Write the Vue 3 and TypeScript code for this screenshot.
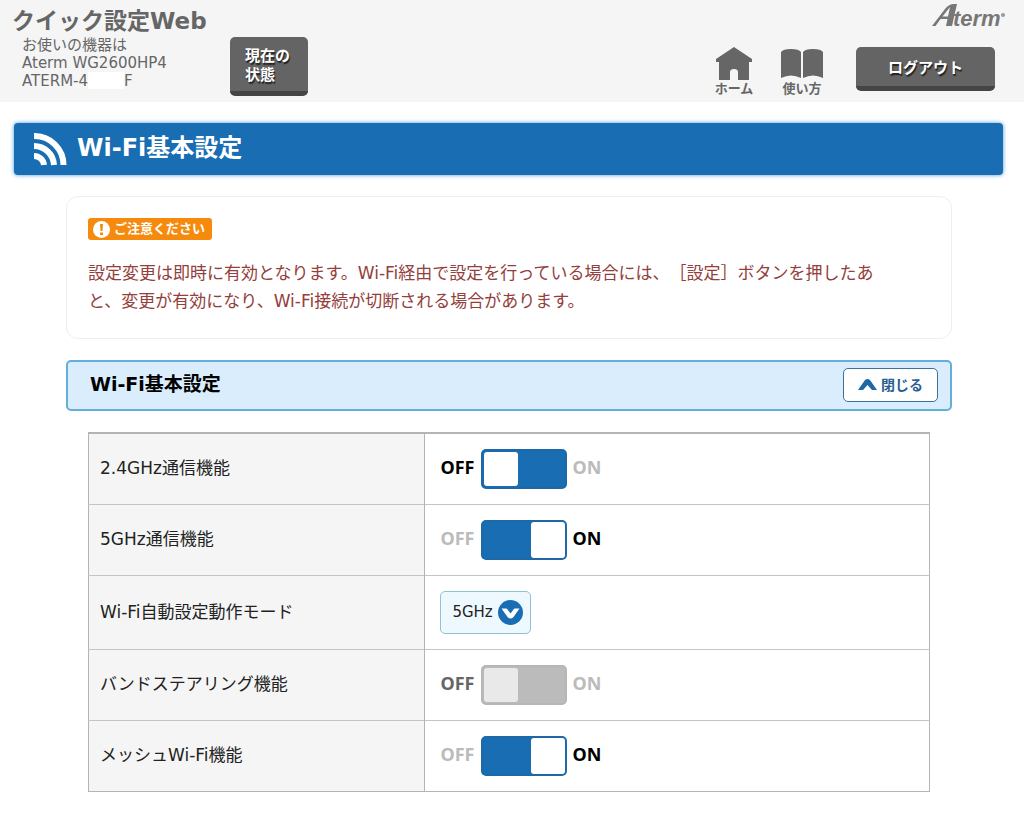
<script setup lang="ts">
import { ref } from 'vue'

interface Row {
  id: string
  label: string
  kind: 'toggle' | 'select'
  on?: boolean
  disabled?: boolean
}

const rows = ref<Row[]>([
  { id: 'band24', label: '2.4GHz通信機能', kind: 'toggle', on: false },
  { id: 'band5', label: '5GHz通信機能', kind: 'toggle', on: true },
  { id: 'mode', label: 'Wi-Fi自動設定動作モード', kind: 'select' },
  { id: 'steering', label: 'バンドステアリング機能', kind: 'toggle', on: false, disabled: true },
  { id: 'mesh', label: 'メッシュWi-Fi機能', kind: 'toggle', on: true },
])
const mode = ref('5GHz')
</script>

<template>
  <div class="page">
    <header class="header">
      <div class="ident">
        <h1>クイック設定Web</h1>
        <p>お使いの機器は<br />Aterm WG2600HP4<br />ATERM-4<span class="mask"></span>F</p>
      </div>
      <button type="button" class="dark status">現在の<br />状態</button>
      <div class="right">
        <svg class="logo" viewBox="0 0 76 34" role="img" aria-label="Aterm">
          <path d="M0 24 L13 7 Q17 2 22 2 H25 L20 24 H14 L15.500 17 H8.500 L3.500 24Z M10.500 14.500 H16 L18 5Z" fill="#777" fill-rule="evenodd" />
          <text x="21" y="24" class="logo-text">term</text>
          <circle cx="71" cy="13" r="2" fill="#999" />
        </svg>
        <nav class="nav">
          <a href="#home">
            <svg width="36" height="34" viewBox="0 0 36 34"><path d="M18 0 L36 12 V15 H33 V33 H22 V25 Q22 22 18 22 Q14 22 14 25 V33 H3 V15 H0 V12Z" fill="#666" /></svg>
            <span>ホーム</span>
          </a>
          <a href="#guide">
            <svg width="42" height="34" viewBox="0 0 42 34"><path d="M0 5 Q2 2 10 2 Q18 2 20 5 V31 Q10 26 0 31Z M22 5 Q24 2 32 2 Q40 2 42 5 V31 Q32 26 22 31Z" fill="#666" /></svg>
            <span>使い方</span>
          </a>
          <button type="button" class="dark logout">ログアウト</button>
        </nav>
      </div>
    </header>

    <h2 class="banner">
      <svg width="33" height="33" viewBox="0 0 33 33" fill="none" stroke="#fff" stroke-width="6">
        <path d="M0 3 A29 29 0 0 1 29.500 32" />
        <path d="M0 13 A20 20 0 0 1 20 32" />
        <path d="M0 23 A10 10 0 0 1 10 32" />
      </svg>
      <span>Wi-Fi基本設定</span>
    </h2>

    <main class="content">
      <section class="notice">
        <div class="tag">
          <svg width="17" height="17" viewBox="0 0 17 17"><circle cx="8.500" cy="8.500" r="8.500" fill="#fff" /><path d="M7 3 H10 L9.500 10 H7.500Z M7 11.500 H10 V14 H7Z" fill="#f58a0c" /></svg>
          <span>ご注意ください</span>
        </div>
        <p>設定変更は即時に有効となります。Wi-Fi経由で設定を行っている場合には、［設定］ボタンを押したあと、変更が有効になり、Wi-Fi接続が切断される場合があります。</p>
      </section>

      <div class="section-head">
        <h3>Wi-Fi基本設定</h3>
        <button type="button" class="close">
          <svg width="19" height="11" viewBox="0 0 19 11"><path d="M0 11 L7 1 Q9.500 -1 12 1 L19 11 H14 L9.500 6 L5 11Z" fill="#1f67a5" /></svg>
          <span>閉じる</span>
        </button>
      </div>

      <table class="settings">
        <tbody>
          <tr v-for="row in rows" :key="row.id">
            <th scope="row"><label :for="row.id">{{ row.label }}</label></th>
            <td>
              <div v-if="row.kind === 'toggle'" class="toggle" :class="{ on: row.on, disabled: row.disabled }">
                <span class="off-text">OFF</span>
                <input :id="row.id" v-model="row.on" type="checkbox" role="switch" :disabled="row.disabled" />
                <span class="on-text">ON</span>
              </div>
              <div v-else class="pick">
                <select :id="row.id" v-model="mode">
                  <option>5GHz</option>
                  <option>2.4GHz</option>
                </select>
                <svg width="25" height="25" viewBox="0 0 25 25"><circle cx="12.500" cy="12.500" r="12.500" fill="#186db3" /><path d="M3.500 8.500 H8 Q9 8.500 9.500 9.500 L12.500 13.500 L15.500 9.500 Q16 8.500 17 8.500 H21.500 L15.500 17 Q12.500 20 9.500 17Z" fill="#fff" /></svg>
              </div>
            </td>
          </tr>
        </tbody>
      </table>
    </main>
  </div>
</template>

<style>
body {
  margin: 0;
  background: #fff;
}
</style>

<style scoped>
.page {
  font-family: "DejaVu Sans", "Noto Sans CJK JP", sans-serif;
  color: #222;
  padding-bottom: 20px;
}
h1, h2, h3, p {
  margin: 0;
}
button {
  font-family: inherit;
}
.header {
  display: flex;
  align-items: flex-start;
  height: 102px;
  box-sizing: border-box;
  padding: 2px 29px 0 12px;
  background: #f5f5f5;
  color: #666;
}
.ident {
  width: 218px;
  padding-top: 4px;
}
.ident h1 {
  font-size: 23px;
  line-height: 30px;
  white-space: nowrap;
}
.ident p {
  padding-left: 10px;
  font-size: 15px;
  line-height: 18px;
}
.mask {
  display: inline-block;
  width: 36px;
  height: 17px;
  vertical-align: -3px;
  background: #fff;
}
.dark {
  border: 0;
  border-bottom: 5px solid #454545;
  border-radius: 5px;
  background: #646464;
  color: #fff;
  font-size: 15px;
  font-weight: bold;
  line-height: 19px;
  text-shadow: 1px 2px 1px #222;
}
.status {
  width: 78px;
  height: 59px;
  margin-top: 35px;
  padding: 4px 0 0 15px;
  text-align: left;
}
.right {
  margin-left: auto;
  display: flex;
  flex-direction: column;
  align-items: flex-end;
}
.logo {
  width: 76px;
  height: 34px;
  margin-right: -13px;
}
.logo-text {
  font: italic bold 22px "Liberation Sans", sans-serif;
  fill: #777;
}
.nav {
  display: flex;
  align-items: flex-start;
  margin-top: 11px;
}
.nav a {
  display: flex;
  flex-direction: column;
  align-items: center;
  width: 68px;
  color: #666;
  font-size: 13px;
  font-weight: bold;
  line-height: 16px;
  text-decoration: none;
}
.logout {
  width: 139px;
  height: 44px;
  margin-left: 20px;
  padding: 4px 0 0;
}
.banner {
  display: flex;
  align-items: center;
  gap: 10px;
  height: 52px;
  margin: 21px 21px 21px 14px;
  padding-left: 20px;
  border-radius: 4px;
  background: #186db3;
  box-shadow: 0 0 4px #4a9ad8;
  color: #fff;
  font-size: 24px;
  line-height: 48px;
}
.banner span {
  padding-bottom: 3px;
}
.content {
  margin: 0 72px 0 66px;
}
.notice {
  padding: 21px 21px 23px;
  border: 1px solid #eee;
  border-radius: 12px;
}
.tag {
  display: inline-flex;
  align-items: center;
  gap: 4px;
  height: 22px;
  padding: 0 7px 0 5px;
  border-radius: 3px;
  background: #f58a0c;
  color: #fff;
  font-size: 13px;
  font-weight: bold;
  line-height: 20px;
}
.notice p {
  margin-top: 17px;
  padding-right: 32px;
  color: #93403c;
  font-size: 17px;
  line-height: 28px;
  text-spacing-trim: space-all;
}
.section-head {
  display: flex;
  align-items: center;
  justify-content: space-between;
  height: 47px;
  margin-top: 21px;
  padding: 0 12px 0 22px;
  border: 2px solid #63aedb;
  border-radius: 5px;
  background: #d9edfc;
}
.section-head h3 {
  color: #000;
  font-size: 19px;
  line-height: 28px;
  padding-bottom: 2px;
}
.close {
  display: flex;
  align-items: center;
  justify-content: center;
  gap: 4px;
  width: 95px;
  height: 34px;
  padding: 0 0 2px;
  border: 1px solid #3f7099;
  border-radius: 5px;
  background: #fff;
  color: #285f90;
  font-size: 14px;
  font-weight: bold;
}
.settings {
  width: calc(100% - 44px);
  margin: 21px 22px 0;
  border: 1px solid #b4b4b4;
  border-top-width: 2px;
  border-collapse: collapse;
  table-layout: fixed;
}
.settings tr + tr {
  border-top: 1px solid #c4c4c4;
}
.settings th {
  width: 40%;
  height: 70px;
  box-sizing: border-box;
  padding: 0 11px 4px;
  border-right: 1px solid #b4b4b4;
  background: #f5f5f5;
  font-size: 17px;
  font-weight: normal;
  text-align: left;
}
.settings td {
  padding: 15px;
}
.toggle {
  display: flex;
  align-items: center;
  gap: 5px;
  color: #bbb;
  font: bold 18px/24px "Noto Sans", sans-serif;
}
.toggle span {
  padding-bottom: 4px;
}
.toggle .off-text {
  width: 36px;
}
.toggle:not(.on) .off-text, .toggle.on .on-text {
  color: #000;
}
.toggle.disabled .off-text {
  color: #666;
}
.toggle input {
  appearance: none;
  display: flex;
  width: 86px;
  height: 40px;
  box-sizing: border-box;
  margin: 0;
  padding: 1px;
  border: 2px solid #1f68a7;
  border-radius: 5px;
  background: #186db3;
}
.toggle input::before {
  content: "";
  width: 34px;
  border-radius: 3px;
  background: #fff;
}
.toggle input:checked {
  padding: 0;
  justify-content: flex-end;
}
.toggle input:disabled {
  border-color: #b6b6b6;
  background: #bbb;
}
.toggle input:disabled::before {
  background: #e9e9e9;
}
.pick {
  position: relative;
  display: inline-block;
  vertical-align: top;
}
.pick select {
  appearance: none;
  width: 91px;
  height: 43px;
  padding: 0 0 0 11px;
  border: 1px solid #8fc3d4;
  border-radius: 5px;
  background: #edf8ff;
  color: #222;
  font: 15px "DejaVu Sans", sans-serif;
}
.pick svg {
  position: absolute;
  top: 9px;
  right: 8px;
  pointer-events: none;
}
</style>
